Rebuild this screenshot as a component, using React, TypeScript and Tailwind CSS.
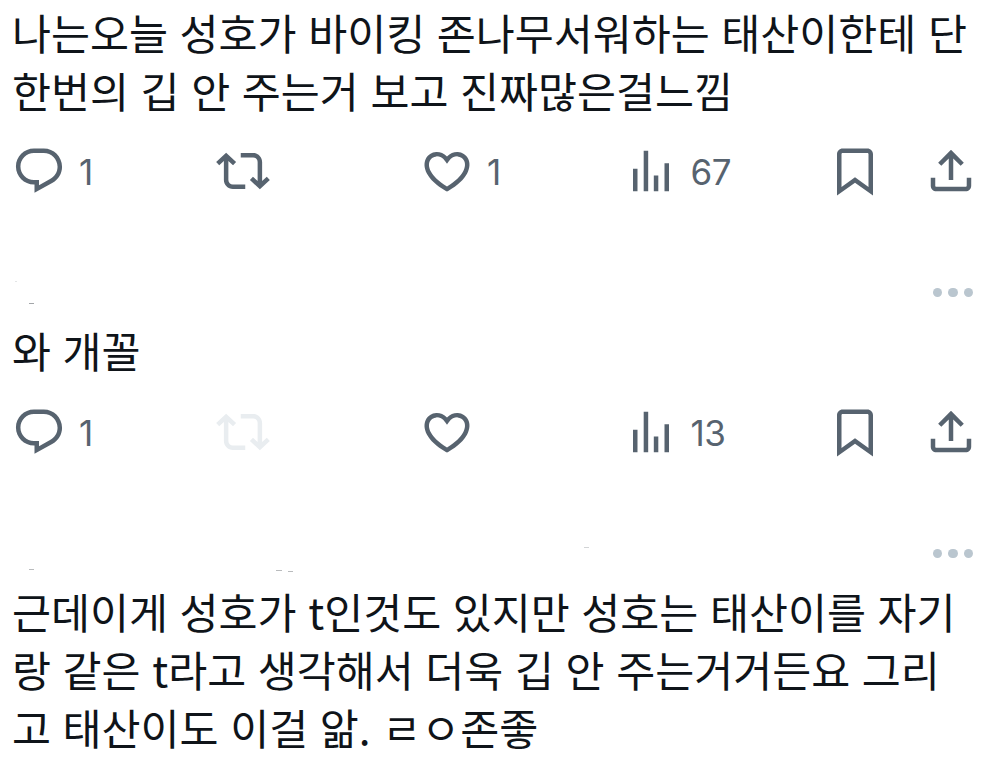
import type { ReactNode } from "react";

const ICONS = {
  reply:
    "M1.751 10c0-4.42 3.584-8 8.005-8h4.366c4.49 0 8.129 3.64 8.129 8.13 0 2.96-1.607 5.68-4.196 7.11l-8.054 4.46v-3.69h-.067c-4.49.1-8.183-3.51-8.183-8.01zm8.005-6c-3.317 0-6.005 2.69-6.005 6 0 3.37 2.77 6.08 6.138 6.01l.351-.01h1.761v2.3l5.087-2.81c1.951-1.08 3.163-3.13 3.163-5.36 0-3.39-2.744-6.13-6.129-6.13H9.756z",
  repost:
    "M4.5 3.88l4.432 4.14-1.364 1.46L5.5 7.55V16c0 1.1.896 2 2 2H13v2H7.5c-2.209 0-4-1.79-4-4V7.55L1.432 9.48.068 8.02 4.5 3.88zM16.5 6H11V4h5.5c2.209 0 4 1.79 4 4v8.45l2.068-1.93 1.364 1.46-4.432 4.14-4.432-4.14 1.364-1.46 2.068 1.93V8c0-1.1-.896-2-2-2z",
  like:
    "M16.697 5.5c-1.222-.06-2.679.51-3.89 2.16l-.805 1.09-.806-1.09C9.984 6.01 8.526 5.44 7.304 5.5c-1.243.07-2.349.78-2.91 1.91-.552 1.12-.633 2.78.479 4.82 1.074 1.97 3.257 4.27 7.129 6.61 3.87-2.34 6.052-4.64 7.126-6.61 1.111-2.04 1.03-3.7.477-4.82-.561-1.13-1.666-1.84-2.908-1.91zm4.187 7.69c-1.351 2.48-4.001 5.12-8.379 7.67l-.503.3-.504-.3c-4.379-2.55-7.029-5.19-8.382-7.67-1.36-2.5-1.41-4.86-.514-6.67.887-1.79 2.647-2.91 4.601-3.01 1.651-.09 3.368.56 4.798 2.01 1.429-1.45 3.146-2.1 4.796-2.01 1.954.1 3.714 1.22 4.601 3.01.896 1.81.846 4.17-.514 6.67z",
  views: "M8.75 21V3h2v18h-2zM18 21V8.5h2V21h-2zM4 21l.004-10h2L6 21H4zm9.248 0v-7h2v7h-2z",
  bookmark:
    "M4 4.5C4 3.12 5.119 2 6.5 2h11C18.881 2 20 3.12 20 4.5v18.44l-8-5.71-8 5.71V4.5zM6.5 4c-.276 0-.5.22-.5.5v14.56l6-4.29 6 4.29V4.5c0-.28-.224-.5-.5-.5h-11z",
  share:
    "M12 2.59l5.7 5.7-1.41 1.42L13 6.41V16h-2V6.41l-3.3 3.3-1.41-1.42L12 2.59zM21 15l-.02 3.51c0 1.38-1.12 2.49-2.5 2.49H5.5C4.11 21 3 19.88 3 18.5V15h2v3.5c0 .28.22.5.5.5h12.98c.28 0 .5-.22.5-.5L19 15h2z",
};

function Icon({ name, className = "" }: { name: keyof typeof ICONS; className?: string }) {
  return (
    <svg viewBox="0 0 24 24" className={`size-[54px] shrink-0 fill-current ${className}`}>
      <path d={ICONS[name]} />
    </svg>
  );
}

function Action({ name, count, className = "" }: { name: keyof typeof ICONS; count?: number; className?: string }) {
  return (
    <div className="flex items-center">
      <Icon name={name} className={className} />
      {count !== undefined && (
        <span className="ml-[13px] pt-[3px] font-['Inter',sans-serif] text-[35px] leading-none tracking-[-0.4px]">
          {count}
        </span>
      )}
    </div>
  );
}

type ActionsProps = { replies: number; likes?: number; views: number; repostDisabled?: boolean };

function Actions({ replies, likes, views, repostDisabled }: ActionsProps) {
  return (
    <div className="grid h-[54px] grid-cols-[204px_204px_203.5px_204.5px_96px_54px] text-[#57636f]">
      <Action name="reply" count={replies} />
      <Action name="repost" className={repostDisabled ? "text-[#e9edf0]" : ""} />
      <Action name="like" count={likes} />
      <Action name="views" count={views} />
      <Action name="bookmark" />
      <Action name="share" />
    </div>
  );
}

function MoreButton() {
  return (
    <div className="flex h-[10px] justify-end gap-[6.4px] pr-[33.6px]">
      {[0, 1, 2].map(i => (
        <span key={i} className="size-[9.3px] rounded-full bg-[#bac6cf]" />
      ))}
    </div>
  );
}

function PostText({ children }: { children: ReactNode }) {
  return (
    <p className="whitespace-nowrap font-['Noto_Sans_CJK_KR',sans-serif] text-[42.4px] leading-[58px] [word-spacing:2.1px] text-[#0f1419]">
      {children}
    </p>
  );
}

export default function App() {
  return (
    <main className="relative h-[762px] w-[1007px] overflow-hidden bg-white pt-[3px] pl-3">
      <article>
        <PostText>
          나는오늘 성호가 바이킹 존나무서워하는 태산이한테 단
          <br />
          한번의 깁 안 주는거 보고 진짜많은걸느낌
        </PostText>
        <div className="pt-[24.5px]">
          <Actions replies={1} likes={1} views={67} />
        </div>
      </article>

      <article className="pt-[90.5px]">
        <MoreButton />
        <div className="pt-[23px]">
          <PostText>와 개꼴</PostText>
        </div>
        <div className="pt-[25.5px]">
          <Actions replies={1} views={13} repostDisabled />
        </div>
      </article>

      <article className="pt-[90.5px]">
        <MoreButton />
        <div className="pt-[23px]">
          <PostText>
            근데이게 성호가 t인것도 있지만 성호는 태산이를 자기
            <br />
            랑 같은 t라고 생각해서 더욱 깁 안 주는거거든요 그리
            <br />고 태산이도 이걸 앎. ㄹㅇ존좋
          </PostText>
        </div>
      </article>

      {/* stray marks left where the author rows are blanked out */}
      <i className="absolute top-[303px] left-[29px] h-px w-[5px] bg-[#a3a6a9]" />
      <i className="absolute top-[281px] left-[15px] h-px w-[2px] bg-[#e3e5e6]" />
      <i className="absolute top-[569px] left-[29px] h-px w-[5px] bg-[#b9bbbd]" />
      <i className="absolute top-[570px] left-[276px] h-px w-[6px] bg-[#b9bbbd]" />
      <i className="absolute top-[571px] left-[288px] h-px w-[5px] bg-[#b9bbbd]" />
      <i className="absolute top-[547px] left-[584px] h-px w-[5px] bg-[#d2d4d6]" />
    </main>
  );
}
